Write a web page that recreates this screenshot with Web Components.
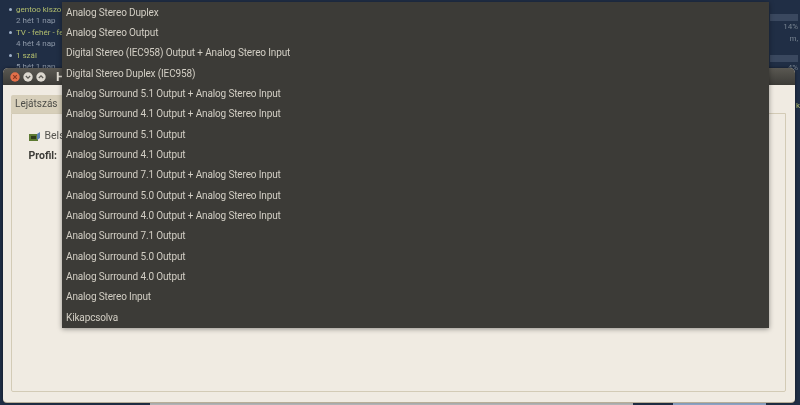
<!DOCTYPE html>
<html>
<head>
<meta charset="utf-8">
<style>
  html, body { margin: 0; height: 100%; overflow: hidden; background: #1f2d42; }
</style>
</head>
<body>
<desktop-view>
  <forum-list slot="back"></forum-list>
  <sound-window slot="win"></sound-window>
  <profile-menu slot="menu"></profile-menu>
</desktop-view>
<script>
class DesktopView extends HTMLElement {
  connectedCallback() {
    this.attachShadow({ mode: 'open' });
    this.shadowRoot.innerHTML = `
      <style>
        :host { display: block; position: relative; width: 800px; height: 405px; overflow: hidden; background: #202e45; filter: blur(.3px); }
        .strip { position: absolute; bottom: 0; height: 3px; }
        .grey { left: 150px; width: 483px; background: #b5b7b8; }
        .shot { left: 673px; width: 93px; background: #8ea6c6; }
      </style>
      <slot name="back"></slot>
      <div class="strip grey"></div>
      <div class="strip shot"></div>
      <slot name="win"></slot>
      <slot name="menu"></slot>
    `;
  }
}

class ForumList extends HTMLElement {
  connectedCallback() {
    this.attachShadow({ mode: 'open' });
    this.shadowRoot.innerHTML = `
      <style>
        :host { display: block; position: absolute; left: 0; top: 0; width: 800px; height: 120px; font: 8px/11px Roboto, sans-serif; color: #8d98a8; }
        ul { list-style: none; margin: 4px 0 0; padding: 0 0 0 16px; display: flex; flex-direction: column; gap: 1px; }
        li { height: 22px; position: relative; }
        li::before { content: ""; position: absolute; left: -7px; top: 4px; width: 3px; height: 3px; border-radius: 50%; background: #9fb0c8; }
        b { display: block; font-weight: normal; color: #b3bf6e; }
        .bar { position: absolute; left: 770px; width: 28px; height: 7px; background: #3a485f; }
        .pct { position: absolute; right: 2px; color: #76828f; }
        .k { position: absolute; right: 0; top: 100px; color: #b3bf6e; }
      </style>
      <ul>
        <li><b>gentoo kiszolgá</b>2 hét 1 nap</li>
        <li><b>TV - fehér - fek</b>4 hét 4 nap</li>
        <li><b>1 szál</b>5 hét 1 nap</li>
      </ul>
      <div class="bar" style="top:14px"></div>
      <span class="pct" style="top:21px">14%</span>
      <span class="pct" style="top:33px">m,</span>
      <div class="bar" style="top:55px"></div>
      <span class="pct" style="top:62px">4%</span>
      <span class="k">k</span>
    `;
  }
}

class SoundWindow extends HTMLElement {
  connectedCallback() {
    this.attachShadow({ mode: 'open' });
    this.shadowRoot.innerHTML = `
      <style>
        :host { display: flex; flex-direction: column; position: absolute; left: 3px; top: 68px; width: 792px; height: 334px; border-radius: 5px 5px 4px 4px; overflow: hidden; background: #f0ebe2; box-shadow: 0 1px 0 #b8ae98, 0 0 3px rgba(0,0,0,.5); }
        .title { height: 17px; flex: none; display: flex; align-items: center; gap: 3px; padding-left: 7px; background: linear-gradient(#5a5852, #3c3b37); color: #dfdbd2; font: bold 13px Roboto, sans-serif; }
        .title svg { flex: none; }
        .name { margin-left: 7px; }
        .body { flex: 1; display: flex; flex-direction: column; padding: 10px 9px 10px 7.5px; }
        .tab { align-self: flex-start; width: 56px; height: 18px; box-sizing: border-box; padding-left: 4.500px; background: #d7cfba; color: #4c4c47; font: 10px/18px Roboto, sans-serif; border-radius: 2px 2px 0 0; }
        .panel { flex: 1; border: 1px solid #d3cbb6; border-radius: 0 0 2px 2px; padding: 15px 17px; color: #55544f; font: 10.5px/14px Roboto, sans-serif; display: flex; flex-direction: column; gap: 6px; }
        .row { display: flex; align-items: center; gap: 4px; }
        .row b { color: #3c3b37; }
        svg { display: block; }
      </style>
      <div class="title">
        <svg width="10" height="10" viewBox="0 0 10 10"><circle cx="5" cy="5" r="4.7" fill="#e4704a"/><path d="M3.2 3.2l3.6 3.6M6.800 3.2l-3.600 3.600" stroke="#8c3a22" stroke-width="1.200"/></svg>
        <svg width="10" height="10" viewBox="0 0 10 10"><circle cx="5" cy="5" r="4.7" fill="#dcd8cf"/><path d="M2.800 4l2.200 2.200 2.200-2.200" fill="none" stroke="#5a5852" stroke-width="1.200"/></svg>
        <svg width="10" height="10" viewBox="0 0 10 10"><circle cx="5" cy="5" r="4.7" fill="#dcd8cf"/><path d="M2.800 6l2.200-2.200 2.200 2.200" fill="none" stroke="#5a5852" stroke-width="1.200"/></svg>
        <span class="name">H</span>
      </div>
      <div class="body">
        <div class="tab">Lejátszás</div>
        <div class="panel">
          <div class="row">
            <svg width="12" height="11" viewBox="0 0 12 11"><rect x="0" y="3" width="9" height="7" fill="#5d7a32"/><rect x="2" y="5" width="5" height="3" fill="#2f3b1c"/><path d="M8 3l3-2v6l-3 2z" fill="#5a7fb0"/></svg>
            <span>Bels</span>
          </div>
          <div class="row"><b>Profil:</b></div>
        </div>
      </div>
    `;
  }
}

class ProfileMenu extends HTMLElement {
  connectedCallback() {
    const items = ['Analog Stereo Duplex', 'Analog Stereo Output', 'Digital Stereo (IEC958) Output + Analog Stereo Input',
      'Digital Stereo Duplex (IEC958)', 'Analog Surround 5.1 Output + Analog Stereo Input', 'Analog Surround 4.1 Output + Analog Stereo Input',
      'Analog Surround 5.1 Output', 'Analog Surround 4.1 Output', 'Analog Surround 7.1 Output + Analog Stereo Input',
      'Analog Surround 5.0 Output + Analog Stereo Input', 'Analog Surround 4.0 Output + Analog Stereo Input',
      'Analog Surround 7.1 Output', 'Analog Surround 5.0 Output', 'Analog Surround 4.0 Output', 'Analog Stereo Input', 'Kikapcsolva'];
    this.attachShadow({ mode: 'open' });
    this.shadowRoot.innerHTML = `
      <style>
        :host { display: block; position: absolute; left: 62px; top: 2px; width: 707px; height: 326px; box-sizing: border-box; padding-top: .6px; background: #3c3b37; box-shadow: 0 1px 5px rgba(0,0,0,.4); color: #d2cec4; font: 10px Roboto, sans-serif; letter-spacing: -.14px; }
        .item { height: 20.33px; line-height: 20.33px; padding-left: 4px; white-space: nowrap; }
      </style>
      ${items.map(t => `<div class="item">${t}</div>`).join('')}
    `;
  }
}

customElements.define('desktop-view', DesktopView);
customElements.define('forum-list', ForumList);
customElements.define('sound-window', SoundWindow);
customElements.define('profile-menu', ProfileMenu);
</script>
</body>
</html>
